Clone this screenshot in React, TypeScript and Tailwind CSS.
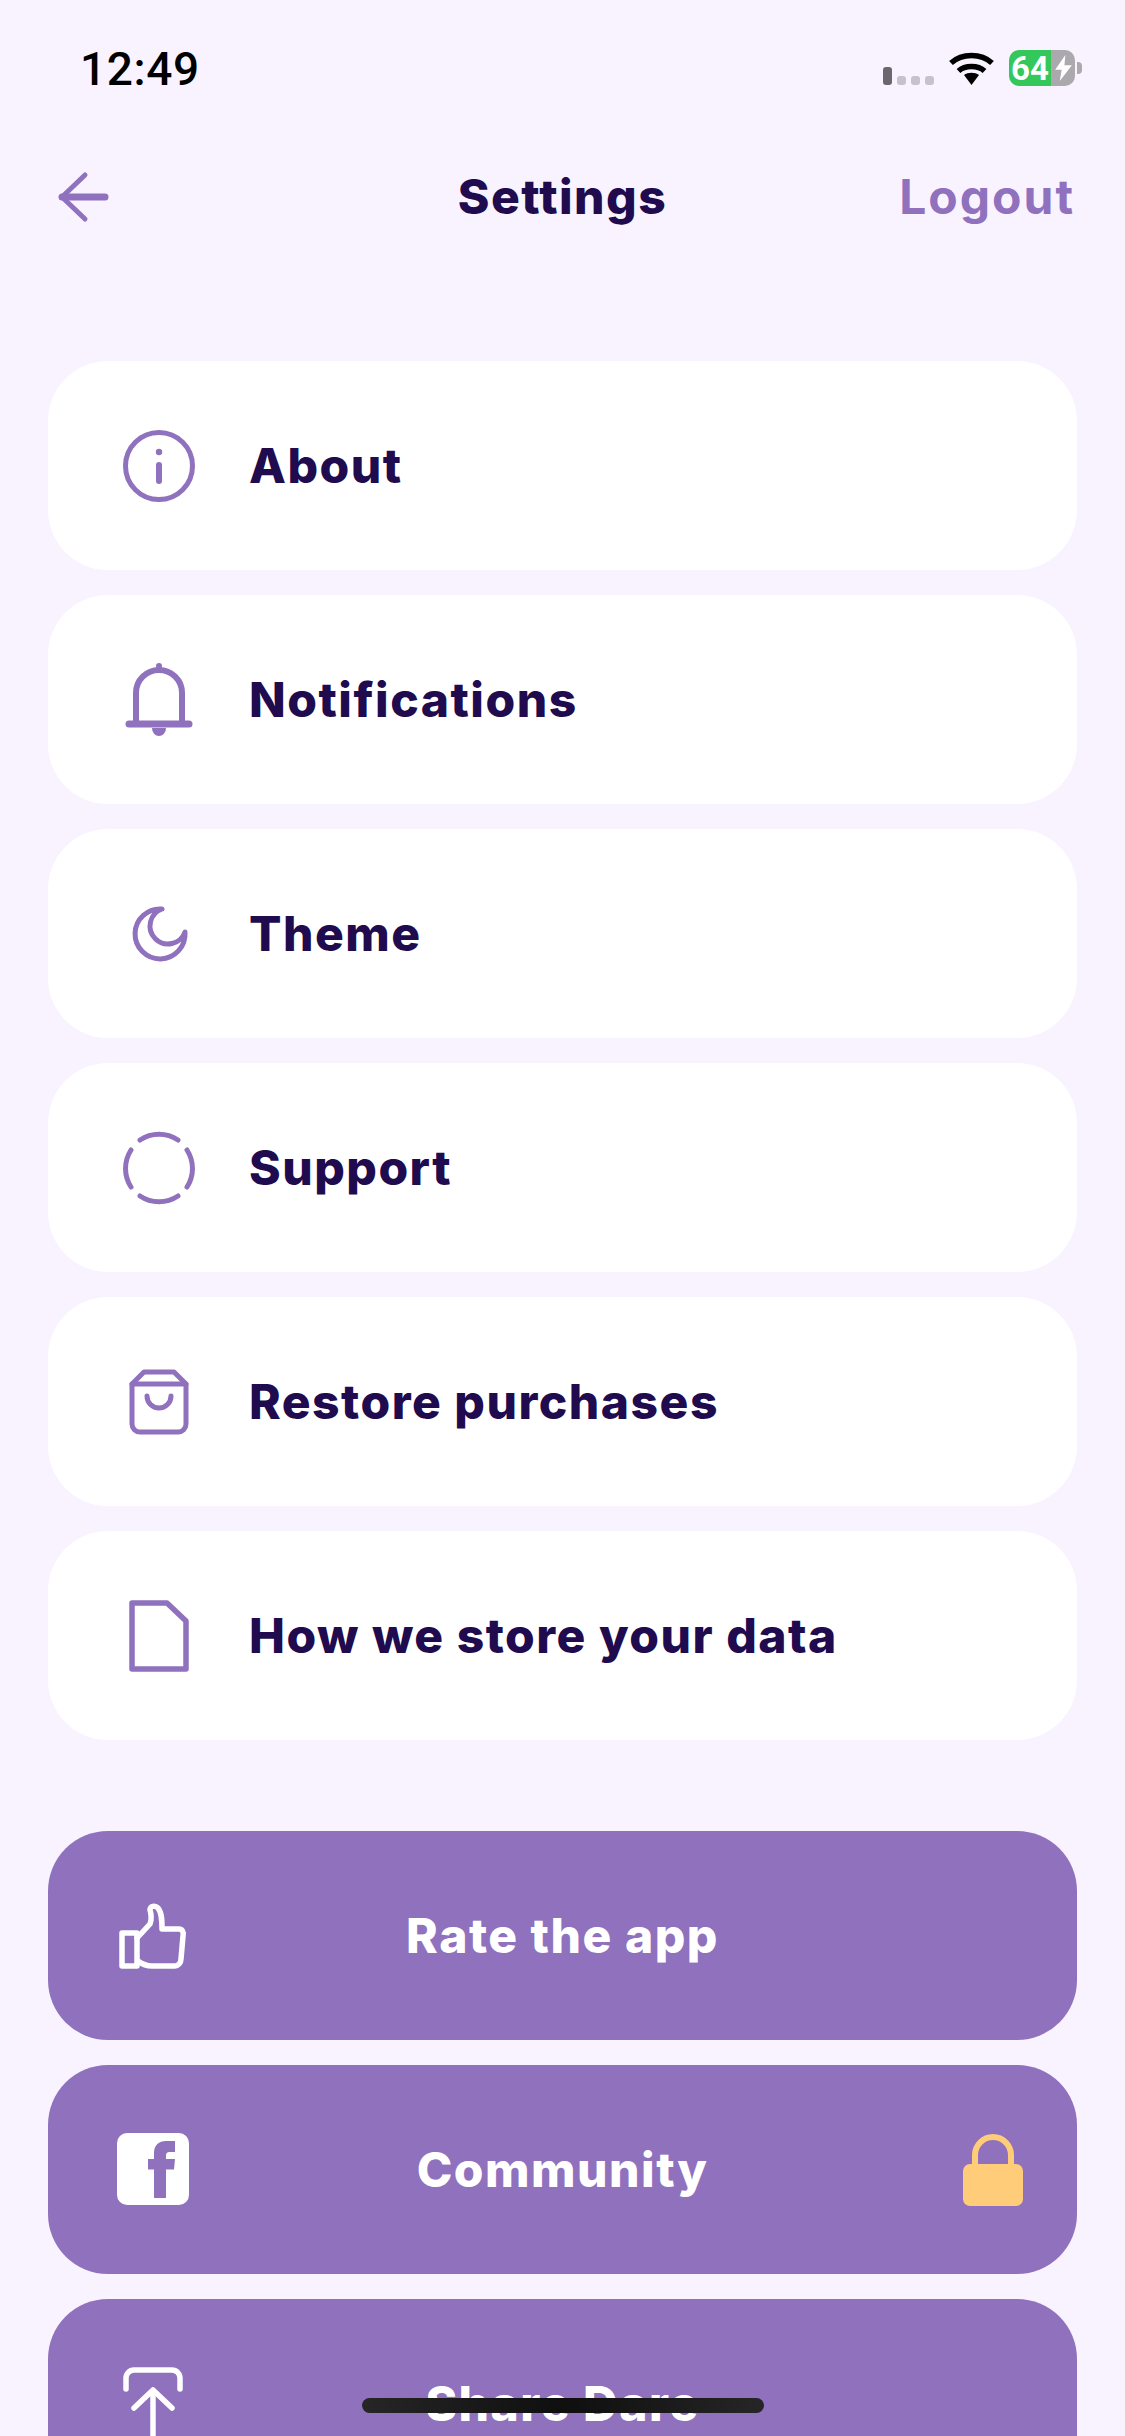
import type { ReactNode } from "react";

const font = "font-['Inter','Liberation_Sans',sans-serif]";

function Icon({ children, fill = "none", stroke = "#8F71BE", sw = 5 }: { children: ReactNode, fill?: string, stroke?: string, sw?: number }) {
  return (
    <svg viewBox="0 0 100 100" className="w-[100px] h-[100px] shrink-0" fill={fill} stroke={stroke} strokeWidth={sw} strokeLinecap="round" strokeLinejoin="round">
      {children}
    </svg>
  );
}

const InfoIcon = () => (
  <Icon>
    <circle cx="51" cy="50" r="33.5" />
    <path d="M51 49V65" strokeWidth={6} />
    <circle cx="51" cy="36" r="3.2" fill="#8F71BE" stroke="none" />
  </Icon>
);

const BellIcon = () => (
  <Icon sw={6}>
    <path d="M28 74V43a23 23 0 0 1 46 0V74" />
    <path d="M21 74H81" strokeWidth={7} />
    <circle cx="51" cy="16" r="3" fill="#8F71BE" stroke="none" />
    <path d="M44 78a7 8 0 0 0 14 0Z" fill="#8F71BE" stroke="none" />
  </Icon>
);

const MoonIcon = () => (
  <Icon>
    <path d="M54 25A25 25 0 1 0 77 48A18 18 0 1 1 54 25Z" />
  </Icon>
);

const SupportIcon = () => (
  <Icon>
    <path d="M32 22A34 34 0 0 1 70 22" />
    <path d="M79 32A34 34 0 0 1 79 69" />
    <path d="M70 78A34 34 0 0 1 32 78" />
    <path d="M23 69A34 34 0 0 1 23 32" />
  </Icon>
);

const BagIcon = () => (
  <Icon>
    <path d="M24 32V72a8 8 0 0 0 8 8H70a8 8 0 0 0 8-8V32L66 20H36Z" />
    <path d="M24 32H78" />
    <path d="M39 44a12 12 0 0 0 24 0" />
  </Icon>
);

const DocIcon = () => (
  <Icon sw={5.5}>
    <path d="M24 17H59L78 35V83H24Z" />
  </Icon>
);

const ThumbIcon = () => (
  <Icon stroke="#fff" sw={5.5}>
    <rect x="14" y="47" width="15" height="33" />
    <path d="M29 52L42 38C44 34 43 27 42 24C42 20 47 19 50 22C54 27 54 35 54 43H71C74 43 76 46 75 50L73 73C73 77 70 80 67 80H44C38 80 34 78 30 75" />
  </Icon>
);

const FacebookIcon = () => (
  <Icon fill="#fff" stroke="none">
    <path fillRule="evenodd" d="M19 13H71A10 10 0 0 1 81 23V75A10 10 0 0 1 71 85H19A10 10 0 0 1 9 75V23A10 10 0 0 1 19 13ZM46 78H58V49.5H66L67 39H58V36C58 33 59 32 62 32H67V21H58C51 21 46 25 46 33V39H40V49.5H46Z" />
  </Icon>
);

const ShareIcon = () => (
  <Icon stroke="#fff" sw={5.5}>
    <path d="M18 35V24a8 8 0 0 1 8-8H64a8 8 0 0 1 8 8V35" />
    <path d="M26 54L45 36L64 54" />
    <path d="M45 37V96" />
  </Icon>
);

const LockIcon = () => (
  <svg viewBox="0 0 60 72" className="w-[60px] h-[72px]" fill="#FFCC79">
    <path d="M12 32V21a18 18 0 0 1 36 0V32" fill="none" stroke="#FFCC79" strokeWidth={6} />
    <rect x="0" y="30" width="60" height="42" rx="7" />
  </svg>
);

function StatusBar() {
  return (
    <div className="h-[136px] flex items-center justify-between pl-[80px] pr-[43px]">
      <span className="text-[46px] font-medium text-black font-['Roboto',sans-serif] tracking-[0.6px] mt-[2px]">12:49</span>
      <div className="flex items-center gap-[15px]">
        <div className="flex items-end gap-[5px] mt-[16px]">
          <div className="w-[9px] h-[18px] rounded-[3px] bg-[#6b676e]" />
          <div className="w-[9px] h-[9px] rounded-[3px] bg-[#c6c2cb]" />
          <div className="w-[9px] h-[9px] rounded-[3px] bg-[#c6c2cb]" />
          <div className="w-[9px] h-[9px] rounded-[3px] bg-[#c6c2cb]" />
        </div>
        <svg viewBox="0 0 45 33" className="w-[45px] h-[33px]" fill="none" stroke="#000" strokeWidth={5.5}>
          <path d="M2 11C13 1 32 1 43 11" />
          <path d="M9.5 19C16 13 29 13 35.5 19" />
          <path d="M15 23C19 20 26 20 30 23L22.5 33Z" fill="#000" stroke="none" />
        </svg>
        <div className="flex items-center gap-[2px]">
          <div className="flex w-[66px] h-[36px] rounded-[10px] overflow-hidden">
            <div className="w-[42px] bg-[#34C759] flex items-center justify-center text-white font-bold text-[33px] leading-none font-['Roboto',sans-serif]">64</div>
            <div className="flex-1 bg-[#ABA8AE] flex items-center justify-center">
              <svg viewBox="0 0 18 28" className="w-[17px] h-[26px]" fill="#fff">
                <path d="M11 0L0 16H7L5 28L18 11H10Z" />
              </svg>
            </div>
          </div>
          <div className="w-[5px] h-[12px] rounded-r-[4px] bg-[#ABA8AE]" />
        </div>
      </div>
    </div>
  );
}

function Header() {
  return (
    <div className="h-[122px] grid grid-cols-[1fr_auto_1fr] items-center px-[50px]">
      <svg viewBox="0 0 56 56" className="w-[56px] h-[56px] ml-[6px]" fill="none" stroke="#8F71BE" strokeWidth={5} strokeLinecap="round" strokeLinejoin="round">
        <path d="M29 6L6 28L29 50" />
        <path d="M6 28H49" strokeWidth={7} />
      </svg>
      <h1 className="text-[48px] font-extrabold text-[#200B4F] tracking-[1.5px]">Settings</h1>
      <span className="text-[48px] font-bold text-[#8F71BE] text-right tracking-[2px]">Logout</span>
    </div>
  );
}

function Row({ icon, label }: { icon: ReactNode, label: string }) {
  return (
    <div className="h-[209px] rounded-[60px] bg-white flex items-center pl-[60px] gap-[41px]">
      {icon}
      <span className="text-[48px] font-extrabold text-[#200B4F] tracking-[1.5px]">{label}</span>
    </div>
  );
}

function ActionRow({ icon, label, right }: { icon: ReactNode, label: string, right?: ReactNode }) {
  return (
    <div className="h-[209px] shrink-0 rounded-[60px] bg-[#8F71BE] grid grid-cols-[1fr_auto_1fr] items-center px-[54px]">
      <div className="ml-[6px]">{icon}</div>
      <span className="text-[48px] font-extrabold text-white tracking-[1.5px]">{label}</span>
      <div className="flex justify-end">{right}</div>
    </div>
  );
}

export default function App() {
  return (
    <div className={`relative w-[1125px] h-[2436px] overflow-hidden bg-[#F8F3FF] ${font}`}>
      <StatusBar />
      <Header />

      <div className="flex flex-col gap-[25px] px-[48px] mt-[103px]">
        <Row icon={<InfoIcon />} label="About" />
        <Row icon={<BellIcon />} label="Notifications" />
        <Row icon={<MoonIcon />} label="Theme" />
        <Row icon={<SupportIcon />} label="Support" />
        <Row icon={<BagIcon />} label="Restore purchases" />
        <Row icon={<DocIcon />} label="How we store your data" />
      </div>

      <div className="flex flex-col gap-[25px] px-[48px] mt-[91px]">
        <ActionRow icon={<ThumbIcon />} label="Rate the app" />
        <ActionRow icon={<FacebookIcon />} label="Community" right={<LockIcon />} />
        <ActionRow icon={<ShareIcon />} label="Share Dare" />
      </div>

      <div className="absolute left-[362px] top-[2398px] w-[402px] h-[15px] rounded-full bg-linear-to-r from-[#262626] via-[#0f0f0f] to-[#262626]" />
    </div>
  );
}
